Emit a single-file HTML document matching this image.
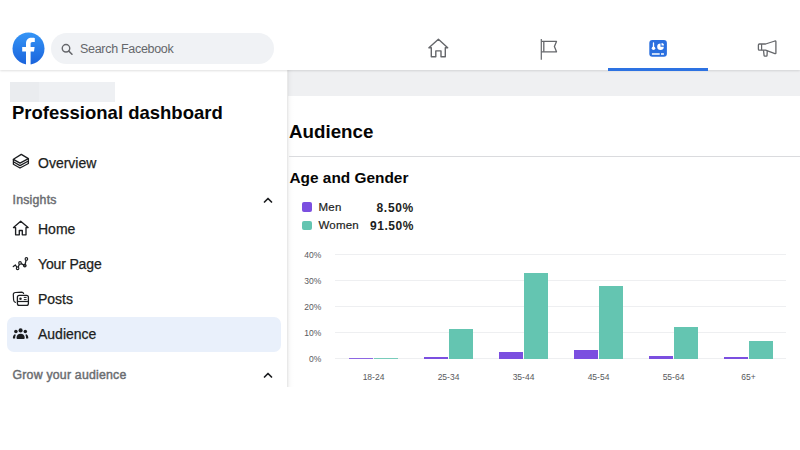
<!DOCTYPE html>
<html><head><meta charset="utf-8">
<style>
*{margin:0;padding:0;box-sizing:border-box}
html,body{width:800px;height:450px;overflow:hidden;background:#fff;font-family:"Liberation Sans",sans-serif;color:#1c1e21}
.abs{position:absolute}
#topbar{position:absolute;left:0;top:0;width:800px;height:70px;background:#fff;z-index:5;box-shadow:0 1px 2px rgba(0,0,0,0.12)}
#search{position:absolute;left:51px;top:33px;width:223px;height:31px;border-radius:16px;background:#f0f2f5}
#search span{position:absolute;left:29px;top:8.6px;font-size:12.5px;color:#65676b;letter-spacing:-0.3px;white-space:nowrap}
#underline{position:absolute;left:608px;top:68px;width:100px;height:3px;background:#2d72e2}
#sidebar{position:absolute;left:0;top:70px;width:287px;height:317px;background:#fff}
#sideborder{position:absolute;left:287px;top:70px;width:7px;height:317px;background:linear-gradient(to right,rgba(0,0,0,0.1) 0,rgba(0,0,0,0.07) 1px,rgba(0,0,0,0.03) 2px,rgba(0,0,0,0.012) 4px,rgba(0,0,0,0) 7px)}
#graybar{position:absolute;left:288px;top:70px;width:512px;height:25.5px;background:#eff0f2}
.t{position:absolute;white-space:nowrap}
.menu{font-size:14px;color:#1c1e21;-webkit-text-stroke:0.25px #1c1e21}
.sec{font-size:12.3px;font-weight:normal;color:#6b6d71;-webkit-text-stroke:0.45px #6b6d71;letter-spacing:0.22px}
#hl{position:absolute;left:6.5px;top:316.5px;width:274px;height:35px;border-radius:7px;background:#e9f0fb}
.grid{position:absolute;left:335px;width:451px;height:1px;background:#eeeff1}
.ylab{position:absolute;font-size:8.5px;color:#58595d;text-align:right;width:30px;left:291.3px}
.xlab{position:absolute;font-size:8.5px;color:#58595d;text-align:center;width:75px}
.bp{position:absolute;background:#7b4fe0;width:24px}
.bt{position:absolute;background:#64c5b1;width:24px}
</style></head><body>

<div id="topbar">
  <svg class="abs" style="left:12px;top:32px" width="33" height="33" viewBox="0 0 33 33">
    <defs><linearGradient id="fbg" x1="0" y1="0" x2="0" y2="1"><stop offset="0" stop-color="#3595f6"/><stop offset="1" stop-color="#1a63dc"/></linearGradient></defs>
    <circle cx="16.5" cy="16.5" r="16" fill="url(#fbg)"/>
    <path d="M14 33 V19.5 H10.2 V15 H14 V11.6 C14 7.8 16.2 5.8 19.6 5.8 C21.2 5.8 22.6 6 22.8 6.1 V10 H20.7 C19 10 18.6 10.8 18.6 12.1 V15 H22.6 L22 19.5 H18.6 V33 Z" fill="#fff"/>
  </svg>
  <div id="search">
    <svg class="abs" style="left:9px;top:10px" width="16" height="14" viewBox="0 0 16 14"><circle cx="6" cy="5.3" r="3.75" fill="none" stroke="#65676b" stroke-width="1.4"/><path d="M8.8 8.1 L12 11.2" stroke="#65676b" stroke-width="1.5" stroke-linecap="round"/></svg>
    <span>Search Facebook</span>
  </div>
  <!-- home -->
  <svg class="abs" style="left:426px;top:37px" width="25" height="22" viewBox="0 0 25 22">
    <path d="M12.4 2.3 L2.9 10.8 L5.3 10.8 L5.3 19.7 L9.8 19.7 L9.8 13.9 L15 13.9 L15 19.7 L19.3 19.7 L19.3 10.8 L21.7 10.8 Z" fill="none" stroke="#65676b" stroke-width="1.4" stroke-linejoin="round"/>
  </svg>
  <!-- flag -->
  <svg class="abs" style="left:536px;top:36px" width="25" height="26" viewBox="0 0 25 26">
    <path d="M5.3 2.9 V23.8" stroke="#65676b" stroke-width="1.2"/>
    <path d="M5.3 5.4 H20.5 L18.4 10.6 L20.5 15.8 H5.3" fill="none" stroke="#65676b" stroke-width="1.3" stroke-linejoin="round"/>
    <path d="M7.8 5.4 V15.8" stroke="#65676b" stroke-width="1.3"/>
  </svg>
  <!-- dashboard -->
  <svg class="abs" style="left:648px;top:39px" width="20" height="19" viewBox="0 0 20 19">
    <rect x="1.3" y="1.0" width="17.6" height="16.8" rx="3" fill="#2a6fdf"/>
    <path d="M5.5 4 V9" stroke="#fff" stroke-width="1.3" stroke-linecap="round"/>
    <circle cx="5.5" cy="9.3" r="1.75" fill="#fff"/>
    <path d="M12.5 4.4 A3.3 3.3 0 1 0 15.8 7.7 L12.5 7.7 Z" fill="#fff"/>
    <path d="M13.5 3.9 A2.5 2.5 0 0 1 16 6.4 L13.5 6.4 Z" fill="#fff"/>
    <path d="M3.9 14.9 H11.7 M13 14.9 H15.9" stroke="#fff" stroke-width="1.5"/>
  </svg>
  <!-- megaphone -->
  <svg class="abs" style="left:755px;top:38.4px" width="24" height="21" viewBox="0 0 24 21">
    <path d="M4.4 6 H10.6 L19.9 3 Q20.9 2.8 20.9 3.8 V14.9 Q20.9 15.9 19.9 15.6 L10.6 12.2 H4.4 Q3.4 12.2 3.4 11.2 V7 Q3.4 6 4.4 6 Z" fill="none" stroke="#65676b" stroke-width="1.3" stroke-linejoin="round"/>
    <path d="M6.6 6 V12.2" stroke="#65676b" stroke-width="1.2"/>
    <path d="M8.5 12.2 L9.1 17.6 Q9.2 18.2 9.8 18.2 H11.4 Q12 18.2 12 17.6 L12.3 12.8" fill="none" stroke="#65676b" stroke-width="1.3" stroke-linejoin="round"/>
  </svg>
  <div id="underline"></div>
</div>

<div id="sidebar"></div>
<div id="graybar"></div>
<div id="sideborder"></div>

<!-- sidebar content -->
<div class="abs" style="left:10px;top:82px;width:105px;height:20px;background:#eef0f3"></div>
<div class="abs" style="left:10px;top:82px;width:29px;height:20px;background:#eaecef"></div>
<div class="t" style="left:12px;top:101.5px;font-size:18.5px;font-weight:bold;color:#050505">Professional dashboard</div>

<svg class="abs" style="left:11px;top:153px" width="20" height="19" viewBox="0 0 20 19">
  <path d="M10.3 1.4 L17.4 5.6 L9 10.1 L2.4 6.3 Z" fill="none" stroke="#1c1e21" stroke-width="1.35" stroke-linejoin="round"/>
  <path d="M2.4 6.3 V11.2 L9 15 L17.4 10.5 V5.6 M2.4 8.8 L9 12.6 L17.4 8" fill="none" stroke="#1c1e21" stroke-width="1.3" stroke-linejoin="round"/>
</svg>
<div class="t menu" style="left:38px;top:154.5px">Overview</div>

<div class="t sec" style="left:12.5px;top:193.2px">Insights</div>
<svg class="abs" style="left:262px;top:195px" width="12" height="10" viewBox="0 0 12 10"><path d="M2.5 7 L6 3.5 L9.5 7" fill="none" stroke="#1c1e21" stroke-width="1.7" stroke-linecap="round" stroke-linejoin="round"/></svg>

<svg class="abs" style="left:11px;top:219px" width="20" height="19" viewBox="0 0 20 19">
  <path d="M9.7 2.3 L2.5 8.6 L4.6 8.6 L4.6 15.8 L8.3 15.8 L8.3 11.5 L11.3 11.5 L11.3 15.8 L15 15.8 L15 8.6 L17.1 8.6 Z" fill="none" stroke="#1c1e21" stroke-width="1.35" stroke-linejoin="round"/>
</svg>
<div class="t menu" style="left:38px;top:221px">Home</div>

<svg class="abs" style="left:11px;top:255px" width="20" height="18" viewBox="0 0 20 18">
  <path d="M2.3 11.6 L4.4 10 L6.6 13.3 L9 7.9 L13.8 10.6 L15.4 3.9" fill="none" stroke="#1c1e21" stroke-width="1.3" stroke-linejoin="round" stroke-linecap="round"/>
  <circle cx="6.6" cy="13.3" r="1.3" fill="#fff" stroke="#1c1e21" stroke-width="1.1"/>
  <circle cx="9" cy="7.9" r="1.3" fill="#fff" stroke="#1c1e21" stroke-width="1.1"/>
  <circle cx="13.8" cy="10.6" r="1.3" fill="#555" stroke="#1c1e21" stroke-width="1.1"/>
  <circle cx="15.4" cy="3.9" r="1.3" fill="#fff" stroke="#1c1e21" stroke-width="1.1"/>
</svg>
<div class="t menu" style="left:38px;top:256px;letter-spacing:-0.15px">Your Page</div>

<svg class="abs" style="left:11px;top:289px" width="20" height="19" viewBox="0 0 20 19">
  <path d="M4.4 13.3 C3.3 13 2.7 12.4 2.6 11 L2.3 5.6 C2.3 4.3 3 3.6 4.4 3.5 L10.6 3.2 C11.7 3.2 12.3 3.6 12.6 4.5" fill="none" stroke="#1c1e21" stroke-width="1.2" stroke-linecap="round"/>
  <rect x="6.4" y="6.4" width="11" height="10" rx="1.9" fill="none" stroke="#1c1e21" stroke-width="1.3"/>
  <path d="M6.4 12.5 H17.4" stroke="#1c1e21" stroke-width="1.2"/>
  <circle cx="9.5" cy="9.7" r="1.25" fill="#1c1e21"/>
  <path d="M12.8 8.4 H15.6 M12.8 10.6 H15.6" stroke="#1c1e21" stroke-width="1"/>
</svg>
<div class="t menu" style="left:38px;top:291px">Posts</div>

<div id="hl"></div>
<svg class="abs" style="left:11px;top:324px" width="20" height="19" viewBox="0 0 20 19">
  <circle cx="9.6" cy="6.4" r="2.05" fill="#1c1e21"/>
  <circle cx="4.9" cy="7.6" r="1.75" fill="#1c1e21"/>
  <circle cx="14.3" cy="7.6" r="1.75" fill="#1c1e21"/>
  <path d="M5.5 13.7 C5.5 11.3 7.2 9.7 9.6 9.7 C12 9.7 13.7 11.3 13.7 13.7 C13.7 14.6 13.3 15 12.5 15 H6.7 C5.9 15 5.5 14.6 5.5 13.7 Z" fill="#1c1e21"/>
  <path d="M1.9 13.9 C1.9 12.3 2.5 11 3.7 10.2 L4.8 10.7 C4.3 11.8 4.1 12.9 4.1 14.4 L2.8 14.6 C2.2 14.6 1.9 14.4 1.9 13.9 Z" fill="#1c1e21"/>
  <path d="M17.3 13.9 C17.3 12.3 16.7 11 15.5 10.2 L14.4 10.7 C14.9 11.8 15.1 12.9 15.1 14.4 L16.4 14.6 C17 14.6 17.3 14.4 17.3 13.9 Z" fill="#1c1e21"/>
</svg>
<div class="t menu" style="left:38px;top:326px">Audience</div>

<div class="t sec" style="left:12.5px;top:368.2px">Grow your audience</div>
<svg class="abs" style="left:262px;top:370px" width="12" height="10" viewBox="0 0 12 10"><path d="M2.5 7 L6 3.5 L9.5 7" fill="none" stroke="#1c1e21" stroke-width="1.7" stroke-linecap="round" stroke-linejoin="round"/></svg>

<!-- content -->
<div class="t" style="left:289px;top:121px;font-size:18.75px;font-weight:bold;color:#050505">Audience</div>
<div class="abs" style="left:289px;top:156px;width:511px;height:1px;background:#dadbde"></div>
<div class="t" style="left:289.5px;top:169px;font-size:15.4px;font-weight:bold;color:#050505">Age and Gender</div>

<div class="abs" style="left:302px;top:202px;width:10px;height:10px;border-radius:2px;background:#7b4fe0"></div>
<div class="t" style="left:318.5px;top:201.2px;font-size:11.5px;letter-spacing:0.2px;color:#1c1e21;-webkit-text-stroke:0.2px #1c1e21">Men</div>
<div class="t" style="left:330px;top:201.2px;width:84px;text-align:right;font-size:12px;font-weight:bold;letter-spacing:0.7px;color:#1c1e21">8.50%</div>
<div class="abs" style="left:302px;top:220.5px;width:10px;height:9.5px;border-radius:2px;background:#64c5b1"></div>
<div class="t" style="left:318.5px;top:219.2px;font-size:11.5px;letter-spacing:0.2px;color:#1c1e21;-webkit-text-stroke:0.2px #1c1e21">Women</div>
<div class="t" style="left:330px;top:219.2px;width:84px;text-align:right;font-size:12px;font-weight:bold;letter-spacing:0.55px;color:#1c1e21">91.50%</div>

<!-- chart -->
<div class="grid" style="top:254px"></div>
<div class="grid" style="top:280px"></div>
<div class="grid" style="top:306px"></div>
<div class="grid" style="top:332px"></div>
<div class="grid" style="top:358px"></div>
<div class="ylab" style="top:249.8px">40%</div>
<div class="ylab" style="top:275.8px">30%</div>
<div class="ylab" style="top:301.8px">20%</div>
<div class="ylab" style="top:327.8px">10%</div>
<div class="ylab" style="top:353.8px">0%</div>

<div class="bp" style="left:348.5px;top:357.8px;height:1px;opacity:0.85"></div>
<div class="bt" style="left:374.0px;top:357.8px;height:1px;opacity:0.85"></div>
<div class="bp" style="left:423.5px;top:357.2px;height:1.6px"></div>
<div class="bt" style="left:449.0px;top:329.2px;height:29.6px"></div>
<div class="bp" style="left:498.5px;top:352.4px;height:6.4px"></div>
<div class="bt" style="left:524.0px;top:272.8px;height:86px"></div>
<div class="bp" style="left:573.5px;top:350.0px;height:8.8px"></div>
<div class="bt" style="left:599.0px;top:286.3px;height:72.5px"></div>
<div class="bp" style="left:648.5px;top:356.0px;height:2.8px"></div>
<div class="bt" style="left:674.0px;top:326.9px;height:31.9px"></div>
<div class="bp" style="left:723.5px;top:357.2px;height:1.6px"></div>
<div class="bt" style="left:749.0px;top:341.3px;height:17.5px"></div>

<div class="xlab" style="left:336px;top:372px">18-24</div>
<div class="xlab" style="left:411px;top:372px">25-34</div>
<div class="xlab" style="left:486px;top:372px">35-44</div>
<div class="xlab" style="left:561px;top:372px">45-54</div>
<div class="xlab" style="left:636px;top:372px">55-64</div>
<div class="xlab" style="left:711px;top:372px">65+</div>

</body></html>
